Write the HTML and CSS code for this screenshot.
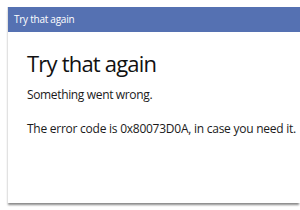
FILE: index.html
```html
<!DOCTYPE html>
<html>
<head>
<meta charset="utf-8">
<link rel="stylesheet" href="styles.css">
</head>
<body>
<div class="window">
  <div class="titlebar">Try that again</div>
  <div class="content">
    <h1 class="heading">Try that again</h1>
    <p class="msg">Something went wrong.</p>
    <p class="msg code">The error code is 0x80073D0A, in case you need it.</p>
  </div>
</div>
</body>
</html>
```
FILE: styles.css
```css
html, body {
  margin: 0;
  padding: 0;
  background: #ffffff;
  width: 300px;
  height: 210px;
  overflow: hidden;
}
body {
  padding: 7px 0 0 7px;
  box-sizing: border-box;
  font-family: "Open Sans", "Noto Sans", sans-serif;
}
.window {
  width: 293px;
  height: 196px;
  box-sizing: border-box;
  background: #ffffff;
  border-left: 1px solid #e2e2e2;
  box-shadow: 0 3px 2px -1px #8a8a8a;
}
.titlebar {
  height: 25px;
  background: #5571b2;
  color: #ffffff;
  font-size: 10px;
  letter-spacing: -0.25px;
  line-height: 25px;
  padding-left: 6px;
}
.content {
  padding: 16px 0 0 19px;
}
.heading {
  margin: 0;
  font-weight: 400;
  font-size: 22px;
  letter-spacing: -0.8px;
  line-height: 30px;
  color: #111111;
}
.msg {
  margin: 9px 0 0;
  font-size: 12px;
  letter-spacing: -0.35px;
  line-height: 16px;
  color: #1a1a1a;
  white-space: nowrap;
}
.code {
  margin-top: 18px;
  letter-spacing: -0.25px;
}
```
